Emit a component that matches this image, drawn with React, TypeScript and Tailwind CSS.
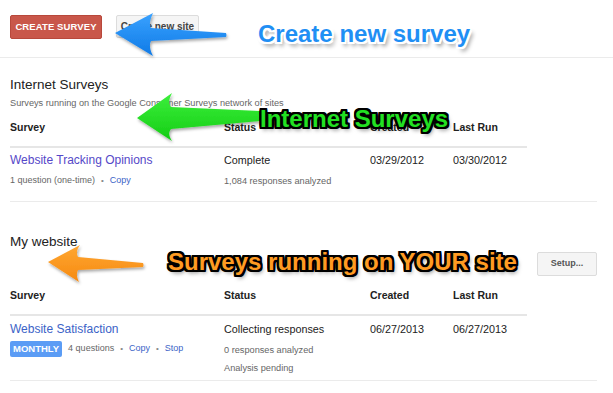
import React from "react";

const blackOutline =
  "[text-shadow:2px_0_0_#000,-2px_0_0_#000,0_2px_0_#000,0_-2px_0_#000,2px_2px_0_#000,-2px_-2px_0_#000,2px_-2px_0_#000,-2px_2px_0_#000,1px_2px_0_#000,2px_1px_0_#000,-1px_2px_0_#000,-2px_1px_0_#000,1px_-2px_0_#000,2px_-1px_0_#000,-1px_-2px_0_#000,-2px_-1px_0_#000,2px_3px_4px_rgba(0,0,0,0.55)]";

function HeaderRow() {
  return (
    <div className="grid grid-cols-[214px_146px_83px_74px] h-[28px] border-b-2 border-[#e6e6e6] text-[10.5px] leading-[14px] font-bold text-[#222]">
      <div>Survey</div>
      <div>Status</div>
      <div>Created</div>
      <div>Last Run</div>
    </div>
  );
}

function Dot() {
  return <span className="text-[#888] text-[8px]">•</span>;
}

export default function App() {
  return (
    <div className="relative w-[613px] h-[393px] overflow-hidden bg-white font-['Liberation_Sans',Arial,sans-serif] text-[#222]">
      {/* top bar */}
      <div className="h-[58px] border-b border-[#ebebeb] px-[10px] pt-[15px] flex items-start gap-[14px]">
        <button className="h-[24px] w-[92px] rounded-[2px] bg-[#c9574a] border border-[#b8483b] text-white text-[9.5px] font-bold tracking-[0.1px]">
          CREATE SURVEY
        </button>
        <button className="h-[23px] w-[83px] rounded-[2px] bg-[#f5f5f5] border border-[#dcdcdc] text-[#444] text-[10px] font-bold">
          Create new site
        </button>
      </div>

      {/* Internet Surveys */}
      <div className="ml-[10px] w-[587px] border-b border-[#ebebeb] pt-[18px]">
        <div className="text-[13.5px] leading-[18px] text-[#222]">Internet Surveys</div>
        <div className="mt-[2px] text-[9.2px] leading-[14px] text-[#666]">
          Surveys running on the Google Consumer Surveys network of sites
        </div>
        <div className="mt-[10px] w-[517px]">
          <HeaderRow />
          <div className="grid grid-cols-[214px_146px_83px_74px] pt-[4px] pb-[13px]">
            <div className="flex flex-col">
              <div className="text-[12px] leading-[16px] text-[#5548c8]">Website Tracking Opinions</div>
              <div className="mt-[6px] h-[14px] flex items-center gap-[6px] text-[9px] text-[#666]">
                <span>1 question (one-time)</span>
                <Dot />
                <span className="text-[#3b63c7]">Copy</span>
              </div>
            </div>
            <div className="flex flex-col">
              <div className="text-[10.8px] leading-[16px] text-[#222]">Complete</div>
              <div className="mt-[6px] text-[9.2px] leading-[14px] text-[#666]">1,084 responses analyzed</div>
            </div>
            <div className="text-[10.8px] leading-[16px]">03/29/2012</div>
            <div className="text-[10.8px] leading-[16px]">03/30/2012</div>
          </div>
        </div>
      </div>

      {/* My website */}
      <div className="ml-[10px] w-[587px] border-b border-[#ebebeb] pt-[31px]">
        <div className="flex items-start justify-between">
          <div className="text-[13.5px] leading-[18px] text-[#222]">My website</div>
          <button className="mt-[19px] h-[24px] w-[60px] rounded-[2px] bg-[#f5f5f5] border border-[#dcdcdc] text-[#555] text-[9px] font-bold">
            Setup...
          </button>
        </div>
        <div className="mt-[12px] w-[517px]">
          <HeaderRow />
          <div className="grid grid-cols-[214px_146px_83px_74px] pt-[5px] pb-[5px]">
            <div className="flex flex-col">
              <div className="text-[12px] leading-[16px] text-[#3b63c7]">Website Satisfaction</div>
              <div className="mt-[4px] h-[16px] flex items-center gap-[6px] text-[9px] text-[#666]">
                <span className="h-[16px] px-[3px] rounded-[2px] bg-[#5b9cf5] text-white font-bold text-[9.5px] leading-[16px]">
                  MONTHLY
                </span>
                <span>4 questions</span>
                <Dot />
                <span className="text-[#3b63c7]">Copy</span>
                <Dot />
                <span className="text-[#3b63c7]">Stop</span>
              </div>
            </div>
            <div className="flex flex-col">
              <div className="text-[10.8px] leading-[16px] text-[#222]">Collecting responses</div>
              <div className="mt-[6px] text-[9.2px] leading-[14px] text-[#666]">0 responses analyzed</div>
              <div className="mt-[4px] text-[9.2px] leading-[14px] text-[#666]">Analysis pending</div>
            </div>
            <div className="text-[10.8px] leading-[16px]">06/27/2013</div>
            <div className="text-[10.8px] leading-[16px]">06/27/2013</div>
          </div>
        </div>
      </div>

      {/* annotation arrows */}
      <svg className="absolute left-0 top-0 pointer-events-none" width="613" height="393" viewBox="0 0 613 393">
        <defs>
          <linearGradient id="gb" x1="0" y1="0" x2="0" y2="1">
            <stop offset="0" stopColor="#3aa2ff" />
            <stop offset="1" stopColor="#0f7ae6" />
          </linearGradient>
          <linearGradient id="gg" x1="0" y1="0" x2="0" y2="1">
            <stop offset="0" stopColor="#3cf03c" />
            <stop offset="1" stopColor="#14cc14" />
          </linearGradient>
          <linearGradient id="go" x1="0" y1="0" x2="0" y2="1">
            <stop offset="0" stopColor="#ffa733" />
            <stop offset="1" stopColor="#f68a10" />
          </linearGradient>
          <filter id="sh" x="-20%" y="-30%" width="140%" height="170%">
            <feDropShadow dx="1" dy="2" stdDeviation="1.5" floodColor="#000" floodOpacity="0.35" />
          </filter>
        </defs>
        <path
          filter="url(#sh)"
          fill="url(#gb)"
          d="M115,33 L153,13 C150,20 149,24 151,28 L226,33 Q227,35 226,37 L151,41 C149,45 150,50 153,56 Z"
        />
        <path
          filter="url(#sh)"
          fill="url(#gg)"
          d="M137,118 L172,93 C169,99 168,103 171,107 L260,111 L260,121 L171,129 C168,133 169,136 172,141 Z"
        />
        <path
          filter="url(#sh)"
          fill="url(#go)"
          d="M48,262 L80,245 C77,249 76,253 78,257 L143,263 Q144,265 143,267 L78,270 C76,274 77,278 79,282 Z"
        />
      </svg>

      {/* annotation texts */}
      <div className="absolute left-[258px] top-[22px] text-[24px] leading-none font-bold text-[#1f8ff4] [text-shadow:2px_0_0_#fff,-2px_0_0_#fff,0_2px_0_#fff,0_-2px_0_#fff,2px_2px_0_#fff,-2px_-2px_0_#fff,2px_-2px_0_#fff,-2px_2px_0_#fff,3px_4px_4px_rgba(0,0,0,0.45)] whitespace-nowrap">
        Create new survey
      </div>
      <div className={`absolute left-[260px] top-[107px] text-[24px] leading-none font-bold text-[#22e022] whitespace-nowrap ${blackOutline}`}>
        Internet Surveys
      </div>
      <div className={`absolute left-[168px] top-[250px] text-[24px] leading-none font-bold text-[#ff9b22] whitespace-nowrap ${blackOutline}`}>
        Surveys running on YOUR site
      </div>
    </div>
  );
}
